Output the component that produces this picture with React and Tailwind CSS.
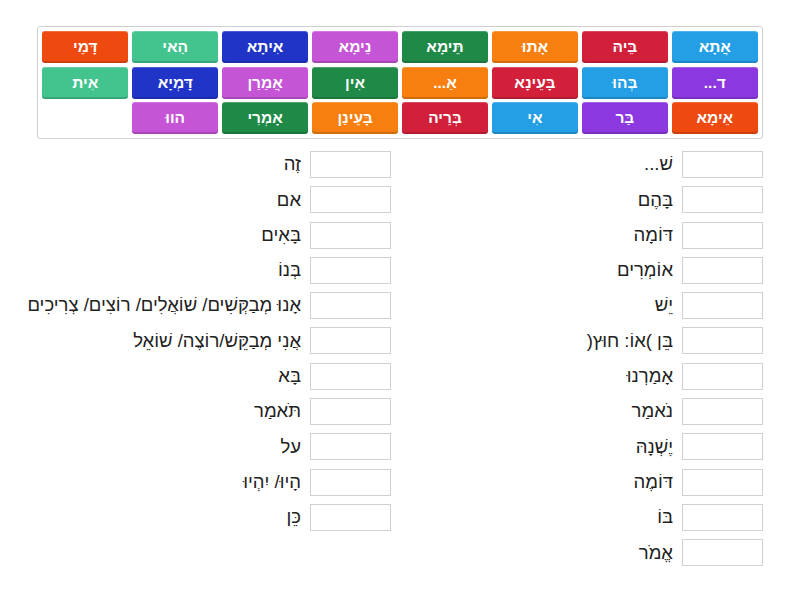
import React from "react";

const C = {
  sky: "bg-[#249fe6]",
  crimson: "bg-[#d2203b]",
  orange: "bg-[#f67f10]",
  green: "bg-[#1f8a47]",
  pink: "bg-[#c554d6]",
  royal: "bg-[#2035c8]",
  mint: "bg-[#43c48e]",
  red: "bg-[#ee4a0f]",
  purple: "bg-[#8b38e0]",
};

const tiles = [
  ["אֲתָא", "sky"], ["בֵּיהּ", "crimson"], ["אָתוּ", "orange"], ["תֵּימָא", "green"],
  ["נֵימָא", "pink"], ["אִיתָא", "royal"], ["הַאי", "mint"], ["דָּמֵי", "red"],
  ["ד...", "purple"], ["בְּהוּ", "sky"], ["בָּעֵינָא", "crimson"], ["אַ...", "orange"],
  ["אִין", "green"], ["אֲמַרַן", "pink"], ["דָּמְיָא", "royal"], ["אִית", "mint"],
  ["אֵימָא", "red"], ["בַּר", "purple"], ["אִי", "sky"], ["בְּרֵיה", "crimson"],
  ["בָּעֵינַן", "orange"], ["אָמְרִי", "green"], ["הווּ", "pink"],
];

const right = [
  "שׁ...", "בָּהֶם", "דּוֹמָה", "אוֹמְרִים", "יֵשׁ", "בֵּן )אוֹ: חוּץ(",
  "אָמַרְנוּ", "נֹאמַר", "יֶשְׁנָהּ", "דּוֹמֶה", "בּוֹ", "אֱמֹר",
];
const left = [
  "זֶה", "אם", "בָּאִים", "בְּנוֹ", "אָנוּ מְבַקְּשִׁים/ שׁוֹאֲלִים/ רוֹצִים/ צְרִיכִים",
  "אֲנִי מְבַקֵּשׁ/רוֹצֶה/ שׁוֹאֵל", "בָּא", "תֹּאמַר", "על", "הָיוּ/ יִהְיוּ", "כֵּן",
];

function Col({ items }) {
  return (
    <div className="flex flex-col gap-[8.3px]">
      {items.map((t, i) => (
        <div key={i} className="flex items-center gap-[9px]">
          <div className="w-[81px] h-[27px] border border-[#d0d0d0] bg-white shrink-0" />
          <div className="text-[18.5px] leading-none text-[#222] whitespace-nowrap">{t}</div>
        </div>
      ))}
    </div>
  );
}

export default function App() {
  return (
    <div dir="rtl" className="w-[800px] h-[600px] bg-white" style={{ fontFamily: '"Liberation Sans", Arial, sans-serif' }}>
      <div className="pt-[26px] mr-[37px]">
        <div className="w-[726px] h-[113px] border border-[#cfcfcf] rounded-[3px] px-[4px] pt-[4px]">
          <div className="grid grid-cols-8 gap-x-[3.5px] gap-y-[3.5px]">
            {tiles.map(([t, c], i) => (
              <div
                key={i}
                className={`${C[c]} h-[32px] rounded-[3px] flex items-center justify-center text-white font-bold text-[15.5px] shadow-[inset_0_-2px_0_rgba(0,0,0,0.15),inset_0_1px_0_rgba(255,255,255,0.2)]`}
              >
                {t}
              </div>
            ))}
          </div>
        </div>
        <div className="mt-[12px] grid grid-cols-[372px_372px]">
          <Col items={right} />
          <Col items={left} />
        </div>
      </div>
    </div>
  );
}
